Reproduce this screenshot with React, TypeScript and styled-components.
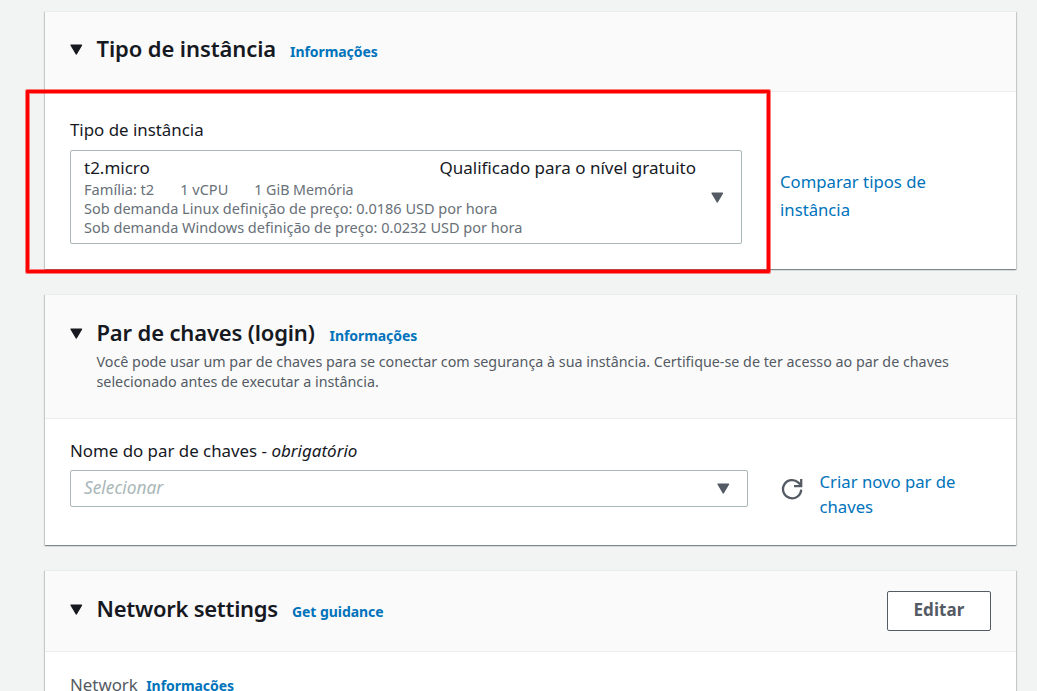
import React from 'react';
import styled, { createGlobalStyle } from 'styled-components';

const GlobalStyle = createGlobalStyle`
  * { box-sizing: border-box; }
  body {
    margin: 0;
    background: #f2f3f3;
    color: #16191f;
    font-family: 'Noto Sans', 'Open Sans', sans-serif;
    overflow: hidden;
  }
`;

const Page = styled.main`
  position: relative;
  display: flex;
  flex-direction: column;
  gap: 25px;
  height: 691px;
  padding: 11px 21px 0 45px;
  overflow: hidden;
`;

const Card = styled.section<{ $height: number }>`
  flex: none;
  height: ${(p) => p.$height}px;
  background: #fff;
  border-top: 1px solid #eaeded;
  box-shadow:
    0 1px 1px 0 rgba(0, 28, 36, 0.3),
    1px 1px 1px 0 rgba(0, 28, 36, 0.15),
    -1px 1px 1px 0 rgba(0, 28, 36, 0.15);
`;

const CardHeader = styled.header<{ $height: number; $top: number }>`
  display: flex;
  align-items: flex-start;
  height: ${(p) => p.$height}px;
  padding: ${(p) => p.$top}px 25px 0;
  background: #fafafa;
  border-bottom: 1px solid #eaeded;
`;

const Toggle = styled.span<{ $top: number }>`
  display: flex;
  width: 26.5px;
  flex: none;
  padding-top: ${(p) => p.$top}px;

  svg { margin-left: -0.5px; }
`;

const TitleRow = styled.div`
  display: flex;
  align-items: baseline;
  height: 28px;
  white-space: nowrap;
`;

const Title = styled.h2<{ $width: number; $spacing: number }>`
  width: ${(p) => p.$width}px;
  margin: 0;
  font-size: 22px;
  font-weight: 600;
  line-height: 28px;
  letter-spacing: ${(p) => p.$spacing}px;
`;

const InfoLink = styled.a`
  color: #0073bb;
  font-size: 14px;
  font-weight: 700;
  line-height: 20px;
  letter-spacing: -0.06px;
`;

const Description = styled.p`
  margin: 6px 0 0;
  color: #545b64;
  font-size: 14.31px;
  line-height: 20px;
  white-space: nowrap;
`;

const EditButton = styled.button`
  width: 104px;
  height: 40px;
  margin: -3px 0 0 auto;
  padding: 0 0 3px;
  border: 1px solid #545b64;
  border-radius: 2px;
  background: #fff;
  color: #545b64;
  font: 700 17px/25px 'Noto Sans', 'Open Sans', sans-serif;
  letter-spacing: 0.1px;
`;

const CardBody = styled.div<{ $top: number }>`
  display: flex;
  padding: ${(p) => p.$top}px 25px 0;
`;

const Field = styled.div<{ $width: number }>`
  flex: none;
  width: ${(p) => p.$width}px;
`;

const Label = styled.div<{ $gap: number; $muted?: boolean }>`
  margin-bottom: ${(p) => p.$gap}px;
  color: ${(p) => (p.$muted ? '#545b64' : '#16191f')};
  font-size: 16.87px;
  line-height: 25px;
  white-space: nowrap;

  em { font-size: 17px; }
  a { margin-left: 4px; }
`;

const SelectBox = styled.div<{ $height: number }>`
  display: flex;
  align-items: center;
  height: ${(p) => p.$height}px;
  padding: 0 17px 0 13px;
  border: 1px solid #aab7b8;
  border-radius: 2px;
  background: #fff;
`;

const Placeholder = styled.span`
  flex: 1;
  margin-top: -2px;
  color: #aab7b8;
  font-size: 17.3px;
  font-style: italic;
  line-height: 25px;
`;

const Option = styled.div`
  display: flex;
  flex: 1;
  flex-direction: column;
  margin-top: -2px;
  white-space: nowrap;
`;

const OptionTop = styled.div`
  display: flex;
  justify-content: space-between;
  padding-right: 15px;
  font-size: 17px;
  line-height: 25px;
`;

const OptionLine = styled.div`
  display: flex;
  gap: 26px;
  color: #687078;
  font-size: 14.52px;
  line-height: 19px;
`;

const Spec = styled.span<{ $size?: number }>`
  font-size: ${(p) => p.$size ?? 14.52}px;
`;

const SideLink = styled.a<{ $left: number; $top: number; $line: number }>`
  margin: ${(p) => p.$top}px 0 0 ${(p) => p.$left}px;
  color: #0073bb;
  font-size: 16.72px;
  line-height: ${(p) => p.$line}px;
  white-space: nowrap;
`;

const RefreshButton = styled.span`
  display: flex;
  margin: 40px 0 0 33px;
`;

const Highlight = styled.div`
  position: absolute;
  top: 90px;
  left: 26px;
  width: 744px;
  height: 183px;
  border: 3px solid #ff0000;
  border-radius: 1px;
  box-shadow:
    0 0 0 1px rgba(255, 0, 0, 0.5),
    inset 0 0 0 1px rgba(255, 0, 0, 0.5);
`;

const Caret = ({ color }: { color: string }) => (
  <svg width="13" height="11" viewBox="0 0 13 11">
    <path d="M1.1 1.2h10.4L6.3 10z" fill={color} stroke={color} strokeWidth="1.4" strokeLinejoin="round" />
  </svg>
);

const RefreshIcon = () => (
  <svg width="22" height="22" viewBox="0 0 22 22" fill="none" stroke="#545b64" strokeWidth="2.3">
    <path d="M20.2 11.6A9.1 9.1 0 1 1 17.4 4.6L20 7.3" />
    <path d="M20.2 1v7.2h-7.2" />
  </svg>
);

export default function App() {
  return (
    <>
      <GlobalStyle />
      <Page>
        <Card $height={258}>
          <CardHeader $height={80} $top={22}>
            <Toggle $top={10}><Caret color="#16191f" /></Toggle>
            <TitleRow>
              <Title $width={193.5} $spacing={-0.1}>Tipo de instância</Title>
              <InfoLink>Informações</InfoLink>
            </TitleRow>
          </CardHeader>
          <CardBody $top={25}>
            <Field $width={672}>
              <Label $gap={8}>Tipo de instância</Label>
              <SelectBox $height={94}>
                <Option>
                  <OptionTop>
                    <span>t2.micro</span>
                    <span>Qualificado para o nível gratuito</span>
                  </OptionTop>
                  <OptionLine>
                    <Spec $size={14.6}>Família: t2</Spec>
                    <Spec>1 vCPU</Spec>
                    <Spec $size={14.25}>1 GiB Memória</Spec>
                  </OptionLine>
                  <OptionLine>Sob demanda Linux definição de preço: 0.0186 USD por hora</OptionLine>
                  <OptionLine>Sob demanda Windows definição de preço: 0.0232 USD por hora</OptionLine>
                </Option>
                <Caret color="#545b64" />
              </SelectBox>
            </Field>
            <SideLink $left={38} $top={51} $line={28}>
              Comparar tipos de<br />instância
            </SideLink>
          </CardBody>
        </Card>

        <Card $height={251}>
          <CardHeader $height={124} $top={23}>
            <Toggle $top={10}><Caret color="#16191f" /></Toggle>
            <div>
              <TitleRow>
                <Title $width={233} $spacing={-0.16}>Par de chaves (login)</Title>
                <InfoLink>Informações</InfoLink>
              </TitleRow>
              <Description>
                Você pode usar um par de chaves para se conectar com segurança à sua instância. Certifique-se de ter acesso ao par de chaves
                <br />
                selecionado antes de executar a instância.
              </Description>
            </div>
          </CardHeader>
          <CardBody $top={19}>
            <Field $width={678}>
              <Label $gap={7}>Nome do par de chaves - <em>obrigatório</em></Label>
              <SelectBox $height={37}>
                <Placeholder>Selecionar</Placeholder>
                <Caret color="#545b64" />
              </SelectBox>
            </Field>
            <RefreshButton><RefreshIcon /></RefreshButton>
            <SideLink $left={16.5} $top={31} $line={25}>
              Criar novo par de<br />chaves
            </SideLink>
          </CardBody>
        </Card>

        <Card $height={258}>
          <CardHeader $height={81} $top={23}>
            <Toggle $top={10}><Caret color="#16191f" /></Toggle>
            <TitleRow>
              <Title $width={195.5} $spacing={-0.27}>Network settings</Title>
              <InfoLink>Get guidance</InfoLink>
            </TitleRow>
            <EditButton>Editar</EditButton>
          </CardHeader>
          <CardBody $top={20}>
            <Label $gap={8} $muted>Network <InfoLink>Informações</InfoLink></Label>
          </CardBody>
        </Card>
        <Highlight />
      </Page>
    </>
  );
}
